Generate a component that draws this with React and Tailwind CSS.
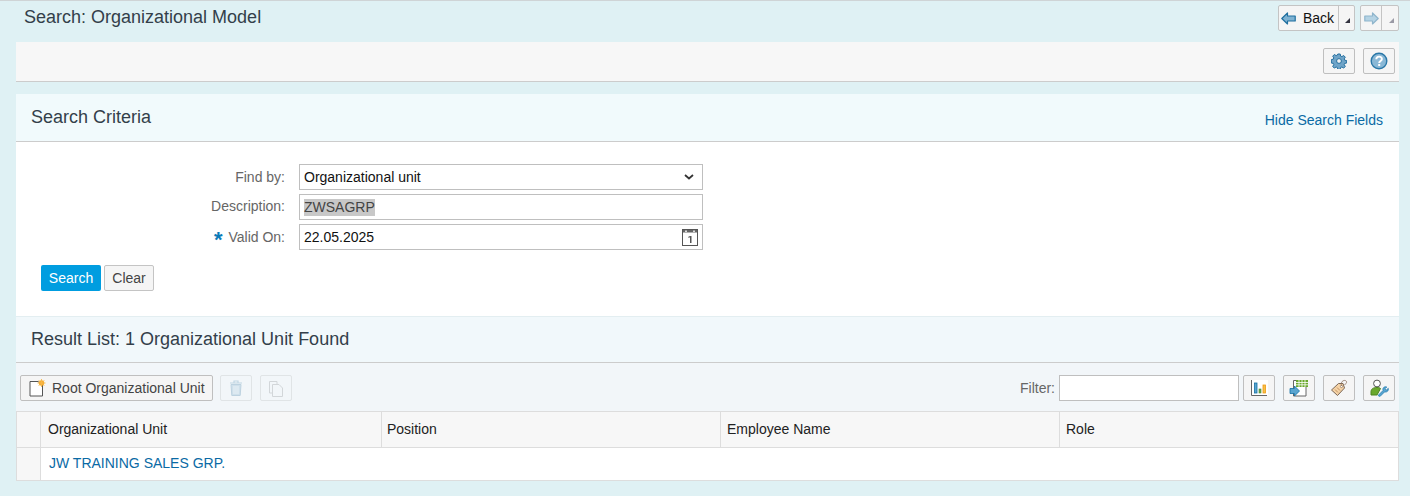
import React from "react";

const Back = ({ c = "#7fb2d2", s = "#1f6f9f", flip = false }) => (
  <svg width="15" height="13" viewBox="0 0 15 13" style={flip ? { transform: "scaleX(-1)" } : undefined}>
    <path d="M.8 6.500 L6.500 1 V4 H14.200 V9 H6.500 V12 Z" fill={c} stroke={s} strokeWidth="1.200" strokeLinejoin="round" />
  </svg>
);
const Corner = ({ c = "#33333f" }) => (
  <svg width="5" height="5" viewBox="0 0 5 5"><path d="M5 0 V5 H0 Z" fill={c} /></svg>
);
const Gear = () => (
  <svg width="16" height="16" viewBox="0 0 16 16">
    <path d="M6.800 1h2.400l.4 2 1.300.6 1.800-1.100 1.600 1.700-1.100 1.700.5 1.300 2 .4v2.400l-2 .4-.5 1.300 1.100 1.700-1.600 1.700-1.800-1.100-1.300.5-.4 2H6.800l-.4-2-1.300-.5-1.800 1.100-1.600-1.700 1.100-1.700-.5-1.300-2-.4V6.600l2-.4.5-1.300-1.100-1.700 1.600-1.700 1.800 1.100 1.300-.6z" fill="#6fa4c8" stroke="#246f9f" strokeWidth="1" />
    <circle cx="8" cy="8" r="2.400" fill="#f4f4f4" stroke="#246f9f" />
  </svg>
);
const Help = () => (
  <svg width="18" height="18" viewBox="0 0 18 18">
    <circle cx="9" cy="9" r="7.800" fill="#8ab8d6" stroke="#2b78a8" strokeWidth="1.400" />
    <path d="M6.300 7.200c0-3.400 5.600-3.400 5.600-.3 0 2-2.700 2-2.700 4" fill="none" stroke="#fff" strokeWidth="1.900" />
    <rect x="8.200" y="12" width="2" height="2" fill="#fff" />
  </svg>
);
const Cal = () => (
  <svg width="16" height="17" viewBox="0 0 16 17">
    <rect x=".5" y=".5" width="15" height="16" fill="#fff" stroke="#555" />
    <rect x="1" y="1" width="14" height="2.500" fill="#666" />
    <rect x="3" y="1.500" width="2" height="1.500" fill="#ddd" />
    <rect x="11" y="1.500" width="2" height="1.500" fill="#ddd" />
    <path d="M6 8 L8 7 H9.500 V14 H8 V8.500 H6Z" fill="#555" />
  </svg>
);
const NewDoc = () => (
  <svg width="17" height="18" viewBox="0 0 17 18">
    <path d="M1 2.500H9L13.500 6V17H1Z" fill="#fff" stroke="#555" />
    <circle cx="12.500" cy="4" r="2.700" fill="#f5a623" />
    <path d="M12.500 0v8M8.500 4h8M9.700 1.200l5.600 5.600M15.300 1.200l-5.600 5.600" stroke="#f7b84a" strokeWidth=".9" />
  </svg>
);
const Trash = () => (
  <svg width="14" height="16" viewBox="0 0 14 16">
    <path d="M1 3h12M5 3V1h4v2" stroke="#c0d6e4" strokeWidth="1.200" fill="none" />
    <path d="M2 4.500h10L11.200 15.500H2.800Z" fill="#cfe0eb" stroke="#bdd2e0" />
    <path d="M5 6v8M7 6v8M9 6v8" stroke="#eaf2f7" />
  </svg>
);
const Copy = () => (
  <svg width="16" height="17" viewBox="0 0 16 17">
    <path d="M1.500 1.500H9V13H1.500Z" fill="#f2f6f9" stroke="#d2d6d9" />
    <path d="M4.500 4.500H11L14.500 8V16.500H4.500Z" fill="#f2f6f9" stroke="#d2d6d9" />
  </svg>
);
const Chart = () => (
  <svg width="17" height="16" viewBox="0 0 17 16">
    <rect x="1" width="16" height="15" fill="#fff" />
    <path d="M.5 0V15.500H16" fill="none" stroke="#666" />
    <rect x="3.500" y="3" width="2.500" height="10" fill="#5aa5d0" stroke="#136fa4" strokeWidth=".8" />
    <rect x="8" y="9" width="2" height="4" fill="#6aa84f" stroke="#4b8a30" strokeWidth=".6" />
    <rect x="12" y="5" width="2.500" height="8" fill="#f7c04a" stroke="#ee9a10" strokeWidth=".8" />
  </svg>
);
const ExportIcon = () => (
  <svg width="20" height="18" viewBox="0 0 20 18">
    <path d="M4.500 1.500H17V17H4.500Z" fill="#fff" stroke="#666" />
    <rect x="7" y="1" width="12" height="7" fill="#6aa82c" />
    <path d="M7 3.500h12M7 5.800h12M10 1v7M13 1v7M16 1v7" stroke="#fff" strokeWidth=".8" />
    <path d="M1 9.500H5.500V7L10.500 12 5.500 17V14.500H1Z" fill="#5aa5d0" stroke="#136fa4" strokeWidth=".8" />
  </svg>
);
const Tag = () => (
  <svg width="18" height="18" viewBox="0 0 18 18">
    <path d="M1.500 11L8.500 4.500h4.500L14.500 9l-7 7.500Z" fill="#f6d3a6" stroke="#7a6655" />
    <circle cx="11.500" cy="7.500" r="1.100" fill="#fff" stroke="#7a6655" strokeWidth=".6" />
    <path d="M11.500 7C10 2 15 0 16.500 2.500c.5 1.500-1 3-2 3" fill="none" stroke="#8a7060" strokeWidth=".8" />
    <path d="M5 10.500l3 3M7 8.500l3 3" stroke="#b98a5a" strokeWidth=".9" />
  </svg>
);
const UserTool = () => (
  <svg width="19" height="18" viewBox="0 0 19 18">
    <circle cx="7" cy="4.500" r="3.400" fill="#fff" stroke="#555" />
    <path d="M1 16V13c0-3 2-4.500 6-4.500 2 0 3 .5 3.500 1L7 16Z" fill="#6aa82c" stroke="#4c8420" />
    <path d="M8 16.500L13 11.500c-.8-2.500 1.500-4.500 3.800-3.500L15 9.800l1.300 1.300 2-1.800c.6 2.400-1.200 4.200-3.800 3.700L10 17.500Z" fill="#5aa5d0" stroke="#1f78ad" strokeWidth=".7" />
  </svg>
);
const IconBtn = ({ children }) => (
  <button className="w-[32px] h-[26px] flex items-center justify-center rounded-[2px] border border-[#bfbfbf] bg-[#f5f5f5]">{children}</button>
);
const Label = ({ children, star, up }) => (
  <div className={`w-[269px] h-[26px] flex items-center justify-end text-[14px] text-[#666666] ${up ? "pb-[1px]" : ""}`}>
    {star && <span className="text-[#0a7ab8] text-[22px] font-bold leading-none mr-[6px] mt-[5px]">*</span>}
    {children}
  </div>
);
const Th = ({ children, w, pl }) => (
  <div className={`${w} ${pl} flex items-center border-r border-[#dddddd] text-[14px] text-[#222222]`}>{children}</div>
);

export default function App() {
  return (
    <div className="w-[1410px] h-[496px] overflow-hidden bg-[#dff1f4] border-t border-[#cfd4d6] pl-[16px] pr-[11px] text-[#333333]" style={{ fontFamily: '"Liberation Sans", Arial, sans-serif' }}>
      <div className="h-[41px] flex items-start justify-between">
        <div className="pl-[8px] pt-[6px] text-[18px] leading-[20px] text-[#333f4a]">Search: Organizational Model</div>
        <div className="flex pt-[4px] gap-[5px]">
          <div className="flex h-[26px] rounded-[2px] border border-[#c4c4c4] bg-[#f5f5f5]">
            <div className="w-[59px] flex items-center pl-[2px] gap-[7px] text-[14px] text-[#111]"><Back /><span>Back</span></div>
            <div className="w-[16px] border-l border-[#c4c4c4] flex items-end justify-end pr-[4px] pb-[7px]"><Corner /></div>
          </div>
          <div className="flex h-[26px] rounded-[2px] border border-[#c4c4c4] bg-[#f5f5f5]">
            <div className="w-[20px] flex items-center justify-center"><Back c="#b5d3e4" s="#8fb5cc" flip /></div>
            <div className="w-[17px] border-l border-[#c4c4c4] flex items-end justify-end pr-[4px] pb-[7px]"><Corner c="#9a9aa5" /></div>
          </div>
        </div>
      </div>

      <div className="h-[40px] bg-[#f7f7f7] border-b border-[#cccccc] flex items-center justify-end gap-[8px] pr-[4px] pb-[1px]">
        <IconBtn><Gear /></IconBtn>
        <IconBtn><Help /></IconBtn>
      </div>

      <div className="mt-[12px] h-[48px] bg-[#f1fafc] border-b border-[#cccccc] flex justify-between">
        <div className="pl-[15px] pt-[12px] text-[18px] leading-[22px] text-[#333f4a]">Search Criteria</div>
        <div className="pr-[16px] pt-[18px] text-[14px] leading-[16px] text-[#0a6aa5]">Hide Search Fields</div>
      </div>

      <div className="h-[175px] bg-white pt-[22px] border-b border-[#e3eef1]">
        <div className="flex flex-col gap-[4px]">
          <div className="flex">
            <Label>Find by:</Label>
            <div className="ml-[14px] w-[404px] h-[26px] border border-[#bfbfbf] flex items-center justify-between pl-[4px] pr-[8px] text-[14px] text-[#111]">
              <span>Organizational unit</span>
              <svg width="10" height="6" viewBox="0 0 10 6"><path d="M1 1l4 3.500L9 1" fill="none" stroke="#333" strokeWidth="1.800" /></svg>
            </div>
          </div>
          <div className="flex">
            <Label up>Description:</Label>
            <div className="ml-[14px] w-[404px] h-[26px] border border-[#bfbfbf] flex items-center pl-[4px] text-[14px] text-[#444]">
              <span className="bg-[#c8c8c8] h-[17px] leading-[17px]">ZWSAGRP</span>
            </div>
          </div>
          <div className="flex">
            <Label star>Valid On:</Label>
            <div className="ml-[14px] w-[404px] h-[26px] border border-[#bfbfbf] flex items-center justify-between pl-[4px] pr-[4px] text-[14px] text-[#111]">
              <span>22.05.2025</span>
              <Cal />
            </div>
          </div>
        </div>
        <div className="flex gap-[3px] ml-[25px] mt-[15px]">
          <button className="w-[60px] h-[26px] rounded-[2px] bg-[#009de0] text-white text-[14px]">Search</button>
          <button className="w-[50px] h-[26px] rounded-[2px] border border-[#c4c4c4] bg-[#f5f5f5] text-[14px] text-[#444]">Clear</button>
        </div>
      </div>

      <div className="h-[46px] bg-[#f1f8fb] border-b border-[#cccccc] pl-[15px] pt-[11px] text-[18px] leading-[22px] text-[#333f4a]">Result List: 1 Organizational Unit Found</div>

      <div className="h-[49px] bg-[#f2f6f9] border-b border-[#dddddd] flex items-center justify-between px-[4px] pt-[2px]">
        <div className="flex items-center">
          <button className="w-[193px] h-[26px] rounded-[2px] border border-[#bfbfbf] bg-[#f5f5f5] flex items-center pl-[8px] gap-[6px] text-[14px] text-[#444]"><NewDoc />Root Organizational Unit</button>
          <div className="ml-[7px] w-[32px] h-[26px] rounded-[2px] border border-[#e0e4e6] flex items-center justify-center"><Trash /></div>
          <div className="ml-[8px] w-[32px] h-[26px] rounded-[2px] border border-[#e0e4e6] flex items-center justify-center"><Copy /></div>
        </div>
        <div className="flex items-center">
          <span className="text-[14px] text-[#666666] mr-[4px]">Filter:</span>
          <div className="w-[180px] h-[26px] bg-white border border-[#bfbfbf] mr-[4px]" />
          <div className="flex gap-[8px]">
            <IconBtn><Chart /></IconBtn>
            <IconBtn><ExportIcon /></IconBtn>
            <IconBtn><Tag /></IconBtn>
            <IconBtn><UserTool /></IconBtn>
          </div>
        </div>
      </div>

      <div className="border-b border-l border-r border-[#dddddd] bg-white">
        <div className="h-[36px] flex bg-[#f7f7f7] border-b border-[#dddddd]">
          <div className="w-[24px] border-r border-[#dddddd]" />
          <Th w="w-[341px]" pl="pl-[7px]">Organizational Unit</Th>
          <Th w="w-[339px]" pl="pl-[5px]">Position</Th>
          <Th w="w-[339px]" pl="pl-[6px]">Employee Name</Th>
          <div className="flex-1 flex items-center pl-[6px] text-[14px] text-[#222222]">Role</div>
        </div>
        <div className="h-[32px] flex">
          <div className="w-[24px] bg-[#f7f7f7] border-r border-[#dddddd]" />
          <div className="pl-[8px] pb-[2px] flex items-center text-[14px] text-[#0a6aa5]">JW TRAINING SALES GRP.</div>
        </div>
      </div>
    </div>
  );
}
